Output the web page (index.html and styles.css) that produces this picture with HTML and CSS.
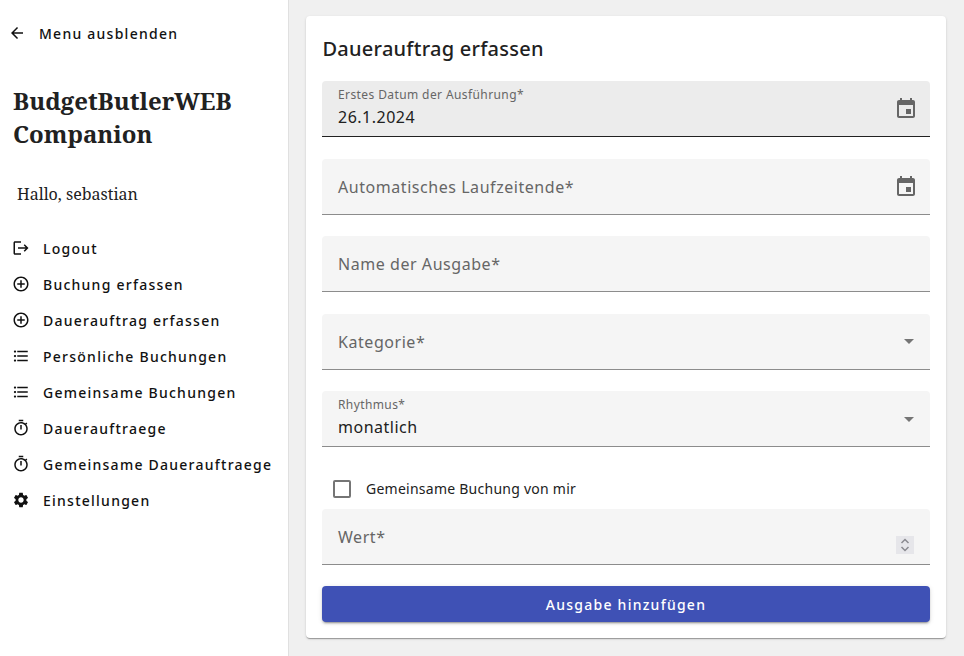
FILE: index.html
```html
<!DOCTYPE html>
<html lang="de">
<head>
<meta charset="UTF-8">
<title>BudgetButlerWEB Companion</title>
<link rel="stylesheet" href="styles.css">
</head>
<body>
    <!-- Sidebar -->
    <aside class="sidenav">
        <a class="nav-item toggle">
            <svg class="nav-icon" viewBox="0 0 24 24"><path d="M20 11H7.83l5.59-5.59L12 4l-8 8 8 8 1.41-1.41L7.83 13H20v-2z"/></svg>
            <span>Menu ausblenden</span>
        </a>
        <h1 class="app-title">BudgetButlerWEB Companion</h1>
        <p class="greeting">Hallo, sebastian</p>
        <nav class="nav-list">
            <a class="nav-item">
                <svg class="nav-icon" viewBox="0 0 24 24"><path d="M17 7l-1.41 1.41L18.17 11H8v2h10.17l-2.58 2.58L17 17l5-5zM4 5h8V3H4c-1.1 0-2 .9-2 2v14c0 1.1.9 2 2 2h8v-2H4V5z"/></svg>
                <span>Logout</span>
            </a>
            <a class="nav-item">
                <svg class="nav-icon" viewBox="0 0 24 24"><path d="M13 7h-2v4H7v2h4v4h2v-4h4v-2h-4V7zm-1-5C6.48 2 2 6.48 2 12s4.48 10 10 10 10-4.48 10-10S17.52 2 12 2zm0 18c-4.41 0-8-3.59-8-8s3.59-8 8-8 8 3.59 8 8-3.59 8-8 8z"/></svg>
                <span>Buchung erfassen</span>
            </a>
            <a class="nav-item">
                <svg class="nav-icon" viewBox="0 0 24 24"><path d="M13 7h-2v4H7v2h4v4h2v-4h4v-2h-4V7zm-1-5C6.48 2 2 6.48 2 12s4.48 10 10 10 10-4.48 10-10S17.52 2 12 2zm0 18c-4.41 0-8-3.59-8-8s3.59-8 8-8 8 3.59 8 8-3.59 8-8 8z"/></svg>
                <span>Dauerauftrag erfassen</span>
            </a>
            <a class="nav-item">
                <svg class="nav-icon" viewBox="0 0 24 24"><path d="M4 10.5c-.83 0-1.5.67-1.5 1.5s.67 1.5 1.5 1.5 1.5-.67 1.5-1.5-.67-1.5-1.5-1.5zm0-6c-.83 0-1.5.67-1.5 1.5S3.17 7.5 4 7.5 5.5 6.83 5.5 6 4.83 4.5 4 4.5zm0 12c-.83 0-1.5.68-1.5 1.5s.68 1.5 1.5 1.5 1.5-.68 1.5-1.5-.67-1.5-1.5-1.5zM7 19h14v-2H7v2zm0-6h14v-2H7v2zm0-8v2h14V5H7z"/></svg>
                <span>Persönliche Buchungen</span>
            </a>
            <a class="nav-item">
                <svg class="nav-icon" viewBox="0 0 24 24"><path d="M4 10.5c-.83 0-1.5.67-1.5 1.5s.67 1.5 1.5 1.5 1.5-.67 1.5-1.5-.67-1.5-1.5-1.5zm0-6c-.83 0-1.5.67-1.5 1.5S3.17 7.5 4 7.5 5.5 6.83 5.5 6 4.83 4.5 4 4.5zm0 12c-.83 0-1.5.68-1.5 1.5s.68 1.5 1.5 1.5 1.5-.68 1.5-1.5-.67-1.5-1.5-1.5zM7 19h14v-2H7v2zm0-6h14v-2H7v2zm0-8v2h14V5H7z"/></svg>
                <span>Gemeinsame Buchungen</span>
            </a>
            <a class="nav-item">
                <svg class="nav-icon" viewBox="0 0 24 24"><path d="M9 1h6v2H9zm10.03 6.39l1.42-1.42c-.43-.51-.9-.99-1.41-1.41l-1.42 1.42C16.07 4.74 14.12 4 12 4c-4.97 0-9 4.03-9 9s4.02 9 9 9 9-4.03 9-9c0-2.12-.74-4.07-1.97-5.61zM12 20c-3.87 0-7-3.13-7-7s3.13-7 7-7 7 3.13 7 7-3.13 7-7 7zm-1-12h2v6h-2z"/></svg>
                <span>Dauerauftraege</span>
            </a>
            <a class="nav-item">
                <svg class="nav-icon" viewBox="0 0 24 24"><path d="M9 1h6v2H9zm10.03 6.39l1.42-1.42c-.43-.51-.9-.99-1.41-1.41l-1.42 1.42C16.07 4.74 14.12 4 12 4c-4.97 0-9 4.03-9 9s4.02 9 9 9 9-4.03 9-9c0-2.12-.74-4.07-1.97-5.61zM12 20c-3.87 0-7-3.13-7-7s3.13-7 7-7 7 3.13 7 7-3.13 7-7 7zm-1-12h2v6h-2z"/></svg>
                <span>Gemeinsame Dauerauftraege</span>
            </a>
            <a class="nav-item">
                <svg class="nav-icon" viewBox="0 0 24 24"><path d="M19.14 12.94c.04-.3.06-.61.06-.94 0-.32-.02-.64-.07-.94l2.03-1.58c.18-.14.23-.41.12-.61l-1.92-3.32c-.12-.22-.37-.29-.59-.22l-2.39.96c-.5-.38-1.03-.7-1.62-.94l-.36-2.54c-.04-.24-.24-.41-.48-.41h-3.84c-.24 0-.43.17-.47.41l-.36 2.54c-.59.24-1.13.57-1.62.94l-2.39-.96c-.22-.08-.47 0-.59.22L2.74 8.87c-.12.21-.08.47.12.61l2.03 1.58c-.05.3-.09.63-.09.94s.02.64.07.94l-2.03 1.58c-.18.14-.23.41-.12.61l1.92 3.32c.12.22.37.29.59.22l2.39-.96c.5.38 1.03.7 1.62.94l.36 2.54c.05.24.24.41.48.41h3.84c.24 0 .44-.17.47-.41l.36-2.54c.59-.24 1.13-.56 1.62-.94l2.39.96c.22.08.47 0 .59-.22l1.92-3.32c.12-.22.07-.47-.12-.61l-2.01-1.58zM12 15.6c-1.98 0-3.6-1.62-3.6-3.6s1.62-3.6 3.6-3.6 3.6 1.62 3.6 3.6-1.62 3.6-3.6 3.6z"/></svg>
                <span>Einstellungen</span>
            </a>
        </nav>
    </aside>

    <!-- Form -->
    <main class="content">
        <section class="card">
            <h2 class="card-title">Dauerauftrag erfassen</h2>

            <div class="field focused">
                <div class="field-text">
                    <span class="field-label">Erstes Datum der Ausführung*</span>
                    <span class="field-value">26.1.2024</span>
                </div>
                <svg class="field-icon" viewBox="0 0 24 24"><path d="M17 12h-5v5h5v-5zM16 1v2H8V1H6v2H5c-1.11 0-1.99.9-1.99 2L3 19c0 1.1.89 2 2 2h14c1.1 0 2-.9 2-2V5c0-1.1-.9-2-2-2h-1V1h-2zm3 18H5V8h14v11z"/></svg>
            </div>

            <div class="field">
                <span class="field-placeholder">Automatisches Laufzeitende*</span>
                <svg class="field-icon" viewBox="0 0 24 24"><path d="M17 12h-5v5h5v-5zM16 1v2H8V1H6v2H5c-1.11 0-1.99.9-1.99 2L3 19c0 1.1.89 2 2 2h14c1.1 0 2-.9 2-2V5c0-1.1-.9-2-2-2h-1V1h-2zm3 18H5V8h14v11z"/></svg>
            </div>

            <div class="field">
                <span class="field-placeholder">Name der Ausgabe*</span>
            </div>

            <div class="field">
                <span class="field-placeholder">Kategorie*</span>
                <span class="select-arrow"></span>
            </div>

            <div class="field">
                <div class="field-text">
                    <span class="field-label">Rhythmus*</span>
                    <span class="field-value">monatlich</span>
                </div>
                <span class="select-arrow"></span>
            </div>

            <label class="check-row">
                <span class="checkbox"></span>
                <span>Gemeinsame Buchung von mir</span>
            </label>

            <div class="field">
                <span class="field-placeholder">Wert*</span>
                <span class="spinner">
                    <svg viewBox="0 0 15 18"><path d="M4 7l3.5-3.5L11 7M4 11l3.5 3.5L11 11"/></svg>
                </span>
            </div>

            <button class="submit-btn">Ausgabe hinzufügen</button>
        </section>
    </main>
</body>
</html>
```

FILE: styles.css
```css
html, body {
    margin: 0;
    padding: 0;
    height: 100%;
}

body {
    display: flex;
    font-family: "Noto Sans", Arial, sans-serif;
    color: #212121;
    background-color: #f0f0f0;
    overflow: hidden;
}

/* Sidebar */
.sidenav {
    width: 288px;
    flex-shrink: 0;
    background-color: #fff;
    border-right: 1px solid #e0e0e0;
    padding-top: 15px;
}

.nav-item {
    display: flex;
    align-items: center;
    height: 36px;
    padding-left: 12px;
    font-size: 14px;
    font-weight: 500;
    letter-spacing: 1.25px;
    color: #111;
}

.nav-icon {
    width: 18px;
    height: 18px;
    margin-right: 13px;
    fill: #111;
}

.toggle {
    padding-left: 8px;
}

.app-title {
    margin: 33px 0 0 13px;
    font-family: "Noto Serif", "DejaVu Serif", serif;
    font-size: 24px;
    font-weight: 700;
    line-height: 33px;
    color: #212121;
}

.greeting {
    margin: 32px 0 0 17px;
    font-family: "Noto Serif", "DejaVu Serif", serif;
    font-size: 16px;
    line-height: 24px;
    color: #212121;
}

.nav-list {
    margin-top: 24px;
}

/* Form card */
.content {
    flex: 1;
    padding: 16px 18px 0 17px;
}

.card {
    height: 622px;
    box-sizing: border-box;
    padding: 16px;
    background-color: #fff;
    border-radius: 4px;
    box-shadow: 0 2px 1px -1px rgba(0, 0, 0, 0.2), 0 1px 1px 0 rgba(0, 0, 0, 0.14), 0 1px 3px 0 rgba(0, 0, 0, 0.12);
}

.card-title {
    margin: 0 0 16px;
    font-size: 20px;
    font-weight: 500;
    line-height: 33px;
    letter-spacing: 0.25px;
    padding-left: 0.5px;
}

.field {
    display: flex;
    align-items: center;
    justify-content: space-between;
    box-sizing: border-box;
    height: 56px;
    margin-bottom: 21.5px;
    padding: 0 12px 0 16px;
    background-color: #f5f5f5;
    border-bottom: 1px solid #8c8c8c;
    border-radius: 4px 4px 0 0;
}

.field.focused {
    background-color: #ececec;
    border-bottom-color: #212121;
}

.field-text {
    display: flex;
    flex-direction: column;
    gap: 2px;
    padding-bottom: 2px;
}

.field-label {
    font-size: 12px;
    line-height: 16px;
    letter-spacing: 0.4px;
    color: #666;
}

.field-value {
    font-size: 16px;
    line-height: 24px;
    letter-spacing: 0.5px;
    color: #212121;
}

.field-placeholder {
    padding-top: 1px;
    font-size: 16px;
    letter-spacing: 0.55px;
    color: #666;
}

.field-icon {
    width: 24px;
    height: 24px;
    margin-top: 1px;
    fill: #666;
}

.select-arrow {
    width: 0;
    height: 0;
    margin: 1px 4.5px 0 0;
    border-left: 5px solid transparent;
    border-right: 5px solid transparent;
    border-top: 5px solid #757575;
}

.spinner {
    display: flex;
    align-self: flex-end;
    width: 18px;
    height: 18px;
    margin: 0 4px 10px 0;
    background-color: #e6e6ea;
}

.spinner svg {
    width: 18px;
    height: 18px;
    fill: none;
    stroke: #8a8a90;
    stroke-width: 1.5;
}

.check-row {
    display: flex;
    align-items: center;
    height: 40px;
    margin: 0.5px 0 0 11px;
    font-size: 14px;
    letter-spacing: 0.25px;
    color: #212121;
}

.checkbox {
    width: 14px;
    height: 14px;
    margin-right: 15px;
    border: 2px solid #757575;
    border-radius: 2px;
}

.submit-btn {
    display: block;
    width: 100%;
    height: 36px;
    margin-top: -0.5px;
    padding-top: 2px;
    font-family: inherit;
    font-size: 14px;
    font-weight: 500;
    letter-spacing: 1.25px;
    color: #fff;
    background-color: #3f51b5;
    border: none;
    border-radius: 4px;
    box-shadow: 0 3px 1px -2px rgba(0, 0, 0, 0.2), 0 2px 2px 0 rgba(0, 0, 0, 0.14), 0 1px 5px 0 rgba(0, 0, 0, 0.12);
}
```
